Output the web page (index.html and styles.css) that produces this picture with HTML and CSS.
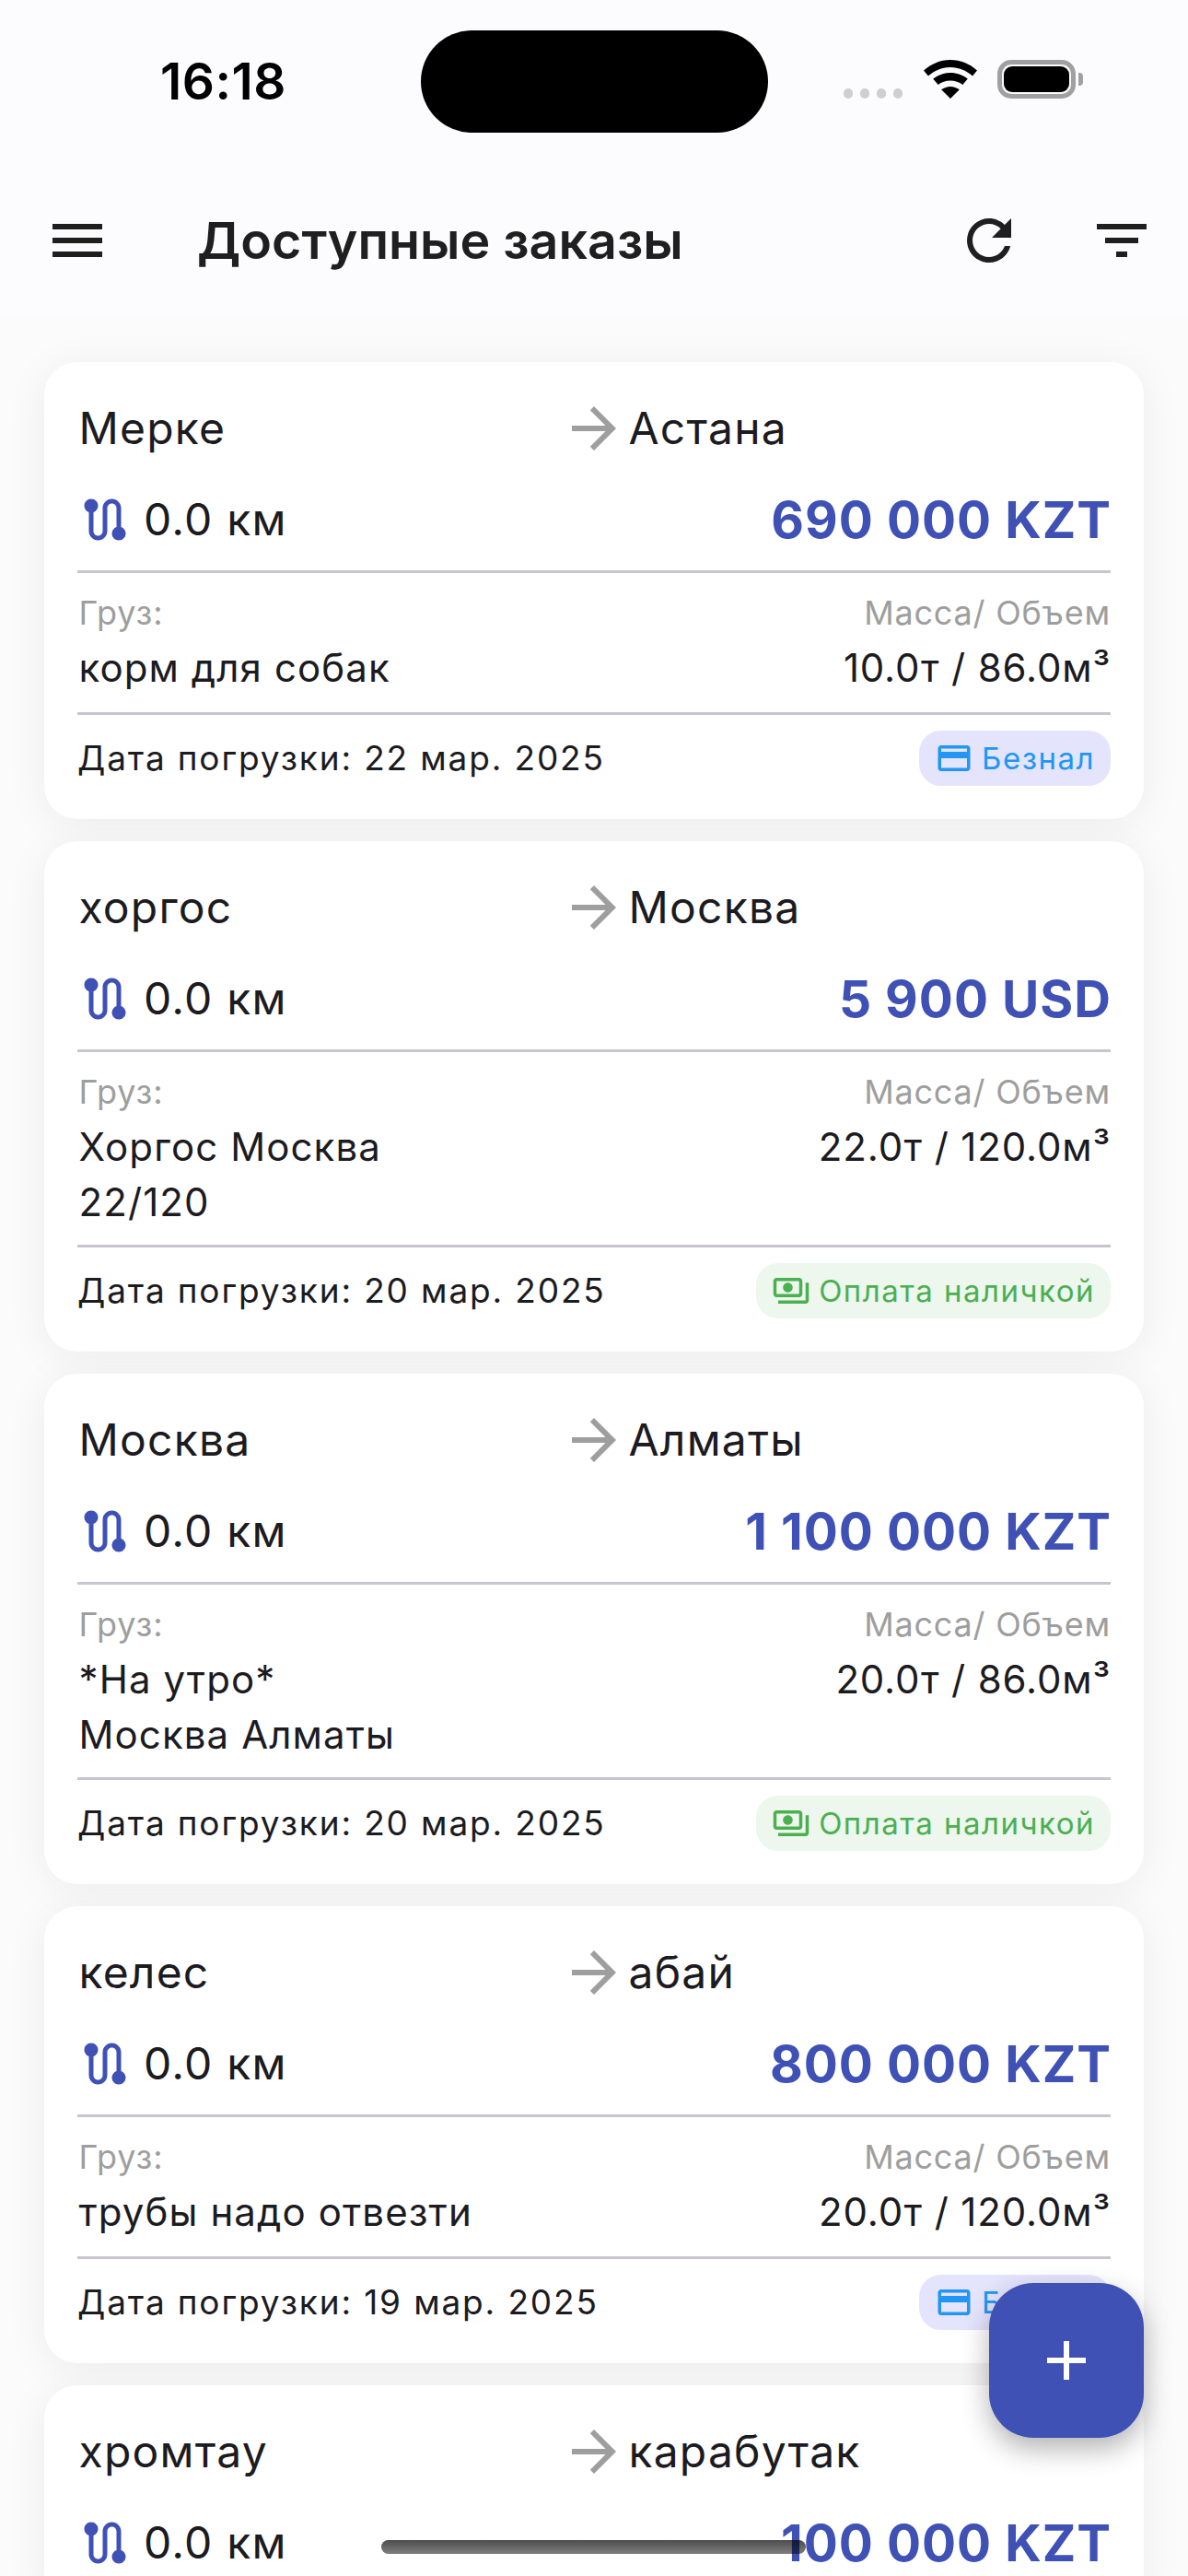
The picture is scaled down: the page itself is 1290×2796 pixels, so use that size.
FILE: index.html
```html
<!DOCTYPE html>
<html lang="ru">
<head>
<meta charset="utf-8">
<title>Доступные заказы</title>
<link rel="stylesheet" href="styles.css">
</head>
<body>
<div class="app">
  <header class="top">
    <div class="status">
      <div class="time">16:18</div>
      <div class="island"></div>
      <div class="sys">
        <div class="dots"><i></i><i></i><i></i><i></i></div>
        <svg class="wifi" viewBox="0 0 58 42"><path d="M29 0C18 0 8 4.200 0 11.500l5 6C12 11.500 20 8 29 8s17 3.500 24 9.500l5-6C50 4.200 40 0 29 0z"/><path d="M29 14c-7 0-13.500 2.500-18.800 6.500l5.500 6.500c3.600-2.800 8.300-4.500 13.300-4.500s9.700 1.700 13.300 4.500l5.500-6.500C42.500 16.500 36 14 29 14z"/><path d="M29 29c-3.700 0-7.100 1.300-9.800 3.300L29 42l9.800-9.700C36.100 30.300 32.700 29 29 29z"/></svg>
        <div class="battery"><div class="level"></div></div>
        <div class="cap"></div>
      </div>
    </div>
    <div class="bar">
      <svg class="ic" viewBox="0 0 24 24"><path d="M3 18h18v-2H3v2zm0-5h18v-2H3v2zm0-7v2h18V6H3z"/></svg>
      <h1 class="title">Доступные заказы</h1>
      <svg class="ic refresh" viewBox="0 0 24 24"><path d="M17.650 6.350C16.200 4.900 14.210 4 12 4c-4.420 0-7.990 3.580-7.990 8s3.570 8 7.990 8c3.730 0 6.840-2.550 7.730-6h-2.080c-.82 2.330-3.040 4-5.650 4-3.310 0-6-2.690-6-6s2.690-6 6-6c1.660 0 3.140.69 4.220 1.780L13 11h7V4l-2.350 2.350z"/></svg>
      <svg class="ic filter" viewBox="0 0 24 24"><path d="M10 18h4v-2h-4v2zM3 6v2h18V6H3zm3 7h12v-2H6v2z"/></svg>
    </div>
  </header>

  <main class="list">
    <article class="card">
      <div class="cities"><span class="city">Мерке</span><svg class="arrow" viewBox="0 0 24 24"><path d="M12 4l-1.410 1.410L16.170 11H4v2h12.170l-5.580 5.590L12 20l8-8z"/></svg><span class="city">Астана</span></div>
      <div class="trip"><svg class="route" viewBox="0 0 24 24"><path d="M19 15.180V7c0-2.210-1.790-4-4-4s-4 1.790-4 4v10c0 1.100-.9 2-2 2s-2-.9-2-2V8.820C8.160 8.400 9 7.300 9 6c0-1.660-1.340-3-3-3S3 4.340 3 6c0 1.300.84 2.400 2 2.820V17c0 2.210 1.790 4 4 4s4-1.790 4-4V7c0-1.100.9-2 2-2s2 .9 2 2v8.180c-1.160.41-2 1.510-2 2.820 0 1.660 1.340 3 3 3s3-1.340 3-3c0-1.300-.84-2.400-2-2.820z"/></svg><span class="dist">0.0 км</span><span class="price">690 000 KZT</span></div>
      <hr class="line">
      <div class="cargo">
        <div class="left"><div class="label">Груз:</div><div class="val">корм для собак</div></div>
        <div class="right"><div class="label">Масса/ Объем</div><div class="val">10.0т / 86.0м³</div></div>
      </div>
      <hr class="line">
      <div class="foot"><span class="date">Дата погрузки: 22 мар. 2025</span>
        <span class="badge card-pay"><svg viewBox="0 0 24 24"><path d="M20 4H4c-1.110 0-1.990.89-1.990 2L2 18c0 1.110.89 2 2 2h16c1.110 0 2-.89 2-2V6c0-1.110-.89-2-2-2zm0 14H4v-6h16v6zm0-10H4V6h16v2z"/></svg>Безнал</span></div>
    </article>

    <article class="card">
      <div class="cities"><span class="city">хоргос</span><svg class="arrow" viewBox="0 0 24 24"><path d="M12 4l-1.410 1.410L16.170 11H4v2h12.170l-5.580 5.590L12 20l8-8z"/></svg><span class="city">Москва</span></div>
      <div class="trip"><svg class="route" viewBox="0 0 24 24"><path d="M19 15.180V7c0-2.210-1.790-4-4-4s-4 1.790-4 4v10c0 1.100-.9 2-2 2s-2-.9-2-2V8.820C8.160 8.400 9 7.300 9 6c0-1.660-1.340-3-3-3S3 4.340 3 6c0 1.300.84 2.400 2 2.820V17c0 2.210 1.790 4 4 4s4-1.790 4-4V7c0-1.100.9-2 2-2s2 .9 2 2v8.180c-1.160.41-2 1.510-2 2.820 0 1.660 1.340 3 3 3s3-1.340 3-3c0-1.300-.84-2.400-2-2.820z"/></svg><span class="dist">0.0 км</span><span class="price">5 900 USD</span></div>
      <hr class="line">
      <div class="cargo">
        <div class="left"><div class="label">Груз:</div><div class="val">Хоргос Москва<br>22/120</div></div>
        <div class="right"><div class="label">Масса/ Объем</div><div class="val">22.0т / 120.0м³</div></div>
      </div>
      <hr class="line">
      <div class="foot"><span class="date">Дата погрузки: 20 мар. 2025</span>
        <span class="badge cash-pay"><svg viewBox="0 0 24 24"><path d="M19 14V6c0-1.100-.9-2-2-2H3c-1.100 0-2 .9-2 2v8c0 1.100.9 2 2 2h14c1.100 0 2-.9 2-2zm-2 0H3V6h14v8zm-7-7c-1.660 0-3 1.340-3 3s1.340 3 3 3 3-1.340 3-3-1.340-3-3-3zm13 0v11c0 1.100-.9 2-2 2H4v-2h17V7h2z"/></svg>Оплата наличкой</span></div>
    </article>

    <article class="card">
      <div class="cities"><span class="city">Москва</span><svg class="arrow" viewBox="0 0 24 24"><path d="M12 4l-1.410 1.410L16.170 11H4v2h12.170l-5.580 5.590L12 20l8-8z"/></svg><span class="city">Алматы</span></div>
      <div class="trip"><svg class="route" viewBox="0 0 24 24"><path d="M19 15.180V7c0-2.210-1.790-4-4-4s-4 1.790-4 4v10c0 1.100-.9 2-2 2s-2-.9-2-2V8.820C8.160 8.400 9 7.300 9 6c0-1.660-1.340-3-3-3S3 4.340 3 6c0 1.300.84 2.400 2 2.820V17c0 2.210 1.790 4 4 4s4-1.790 4-4V7c0-1.100.9-2 2-2s2 .9 2 2v8.180c-1.160.41-2 1.510-2 2.820 0 1.660 1.340 3 3 3s3-1.340 3-3c0-1.300-.84-2.400-2-2.820z"/></svg><span class="dist">0.0 км</span><span class="price">1 100 000 KZT</span></div>
      <hr class="line">
      <div class="cargo">
        <div class="left"><div class="label">Груз:</div><div class="val">*На утро*<br>Москва Алматы</div></div>
        <div class="right"><div class="label">Масса/ Объем</div><div class="val">20.0т / 86.0м³</div></div>
      </div>
      <hr class="line">
      <div class="foot"><span class="date">Дата погрузки: 20 мар. 2025</span>
        <span class="badge cash-pay"><svg viewBox="0 0 24 24"><path d="M19 14V6c0-1.100-.9-2-2-2H3c-1.100 0-2 .9-2 2v8c0 1.100.9 2 2 2h14c1.100 0 2-.9 2-2zm-2 0H3V6h14v8zm-7-7c-1.660 0-3 1.340-3 3s1.340 3 3 3 3-1.340 3-3-1.340-3-3-3zm13 0v11c0 1.100-.9 2-2 2H4v-2h17V7h2z"/></svg>Оплата наличкой</span></div>
    </article>

    <article class="card">
      <div class="cities"><span class="city">келес</span><svg class="arrow" viewBox="0 0 24 24"><path d="M12 4l-1.410 1.410L16.170 11H4v2h12.170l-5.580 5.590L12 20l8-8z"/></svg><span class="city">абай</span></div>
      <div class="trip"><svg class="route" viewBox="0 0 24 24"><path d="M19 15.180V7c0-2.210-1.790-4-4-4s-4 1.790-4 4v10c0 1.100-.9 2-2 2s-2-.9-2-2V8.820C8.160 8.400 9 7.300 9 6c0-1.660-1.340-3-3-3S3 4.340 3 6c0 1.300.84 2.400 2 2.820V17c0 2.210 1.790 4 4 4s4-1.790 4-4V7c0-1.100.9-2 2-2s2 .9 2 2v8.180c-1.160.41-2 1.510-2 2.820 0 1.660 1.340 3 3 3s3-1.340 3-3c0-1.300-.84-2.400-2-2.820z"/></svg><span class="dist">0.0 км</span><span class="price">800 000 KZT</span></div>
      <hr class="line">
      <div class="cargo">
        <div class="left"><div class="label">Груз:</div><div class="val">трубы надо отвезти</div></div>
        <div class="right"><div class="label">Масса/ Объем</div><div class="val">20.0т / 120.0м³</div></div>
      </div>
      <hr class="line">
      <div class="foot"><span class="date">Дата погрузки: 19 мар. 2025</span>
        <span class="badge card-pay"><svg viewBox="0 0 24 24"><path d="M20 4H4c-1.110 0-1.990.89-1.990 2L2 18c0 1.110.89 2 2 2h16c1.110 0 2-.89 2-2V6c0-1.110-.89-2-2-2zm0 14H4v-6h16v6zm0-10H4V6h16v2z"/></svg>Безнал</span></div>
    </article>

    <article class="card">
      <div class="cities"><span class="city">хромтау</span><svg class="arrow" viewBox="0 0 24 24"><path d="M12 4l-1.410 1.410L16.170 11H4v2h12.170l-5.580 5.590L12 20l8-8z"/></svg><span class="city">карабутак</span></div>
      <div class="trip"><svg class="route" viewBox="0 0 24 24"><path d="M19 15.180V7c0-2.210-1.790-4-4-4s-4 1.790-4 4v10c0 1.100-.9 2-2 2s-2-.9-2-2V8.820C8.160 8.400 9 7.300 9 6c0-1.660-1.340-3-3-3S3 4.340 3 6c0 1.300.84 2.400 2 2.820V17c0 2.210 1.790 4 4 4s4-1.790 4-4V7c0-1.100.9-2 2-2s2 .9 2 2v8.180c-1.160.41-2 1.510-2 2.820 0 1.660 1.340 3 3 3s3-1.340 3-3c0-1.300-.84-2.400-2-2.820z"/></svg><span class="dist">0.0 км</span><span class="price">100 000 KZT</span></div>
    </article>
  </main>

  <button class="fab" aria-label="Добавить"><svg viewBox="0 0 24 24"><path d="M19 13h-6v6h-2v-6H5v-2h6V5h2v6h6v2z"/></svg></button>
  <div class="home"></div>
</div>
</body>
</html>
```

FILE: styles.css
```css
* { box-sizing: border-box; }
html, body { margin: 0; padding: 0; }
body {
  font-family: Inter, "Noto Sans", sans-serif;
  color: #1c1b1f;
  background: #fbfbfc;
}
.app {
  position: relative;
  width: 1290px;
  height: 2796px;
  overflow: hidden;
}
.top {
  position: relative;
  z-index: 1;
  height: 345px;
  background: #fcfcff;
}
.status {
  display: grid;
  grid-template-columns: 457px 377px 1fr;
  height: 177px;
}
.time {
  padding: 55px 0 0 174px;
  font-size: 55px;
  line-height: 66px;
  font-weight: 600;
  color: #000;
  letter-spacing: .5px;
}
.island {
  margin-top: 33px;
  height: 111px;
  border-radius: 56px;
  background: #000;
}
.sys {
  display: flex;
  align-items: flex-end;
  height: 107px;
  padding-left: 82px;
}
.dots { display: flex; gap: 8px; }
.dots i {
  display: block;
  width: 10px;
  height: 11px;
  border-radius: 5px;
  background: #cfcfcf;
}
.wifi { width: 58px; height: 42px; margin-left: 23px; fill: #000; }
.battery {
  width: 85px;
  height: 42px;
  margin-left: 22px;
  padding: 2px;
  border: 5px solid #a0a0a0;
  border-radius: 15px;
}
.level { height: 100%; border-radius: 9px; background: #000; }
.cap {
  width: 5px;
  height: 14px;
  margin: 0 0 14px 3px;
  border-radius: 0 4px 4px 0;
  background: #a0a0a0;
}
.bar {
  display: flex;
  align-items: center;
  height: 168px;
  padding: 0 36px 0 48px;
}
.ic { width: 72px; height: 72px; flex: none; fill: #1f1f1f; }
.title {
  flex: 1;
  margin: 0 0 0 94px;
  font-size: 55.5px;
  font-weight: 600;
  line-height: 72px;
  color: #1f1f1f;
}
.filter { margin-left: 72px; }

.list {
  display: flex;
  flex-direction: column;
  gap: 24px;
  padding: 48px 48px 0;
}
.card {
  flex: none;
  padding: 36px;
  border-radius: 36px;
  background: #fff;
  box-shadow: 0 6px 48px rgba(0, 0, 0, .06);
}
.cities {
  display: grid;
  grid-template-columns: 1fr 72px 1fr;
  align-items: center;
  height: 72px;
}
.city, .dist {
  font-size: 48px;
  line-height: 72px;
  letter-spacing: 1.2px;
}
.city { padding-left: 1.5px; }
.arrow { width: 72px; height: 72px; fill: #9e9e9e; }
.trip {
  display: flex;
  align-items: center;
  height: 76px;
  margin-top: 24px;
  padding-top: 2px;
}
.route { width: 60px; height: 60px; flex: none; fill: #3f51b5; }
.dist { margin-left: 12px; flex: 1; }
.price {
  margin-right: -1px;
  font-size: 55px;
  line-height: 74px;
  font-weight: 700;
  letter-spacing: 1px;
  color: #3f51b5;
}
.line {
  height: 3px;
  margin: 18px 0 19px;
  border: 0;
  background: #cac4d0;
}
.cargo {
  display: flex;
  justify-content: space-between;
  min-height: 116px;
}
.cargo + .line { margin: 16px 0 17px; }
.left { padding-left: 1.5px; }
.right { text-align: right; }
.label {
  font-size: 36px;
  line-height: 48px;
  letter-spacing: .8px;
  color: #9e9e9e;
}
.val {
  margin-top: 6px;
  font-size: 42px;
  line-height: 60px;
  letter-spacing: 1.1px;
}
.right .val { letter-spacing: .85px; }
.foot {
  display: flex;
  justify-content: space-between;
  align-items: center;
}
.date {
  font-size: 37px;
  line-height: 48px;
  letter-spacing: 1.85px;
}
.badge {
  display: flex;
  align-items: center;
  gap: 9px;
  height: 60px;
  padding: 0 17px 0 17px;
  border-radius: 24px;
  font-size: 33px;
  letter-spacing: 1.5px;
}
.badge svg { width: 42px; height: 42px; fill: currentColor; }
.card-pay { background: #e4e4fd; color: #2196f3; }
.cash-pay { background: #edf7ee; color: #4caf50; }

.fab {
  position: absolute;
  left: 1074px;
  top: 2478px;
  z-index: 2;
  display: flex;
  align-items: center;
  justify-content: center;
  width: 168px;
  height: 168px;
  padding: 0;
  border: 0;
  border-radius: 48px;
  background: #3f51b5;
  box-shadow: 0 12px 30px rgba(0, 0, 0, .3);
}
.fab svg { width: 72px; height: 72px; fill: #fff; }
.home {
  position: absolute;
  left: 414px;
  top: 2757px;
  z-index: 3;
  width: 461px;
  height: 15px;
  border-radius: 8px;
  background: linear-gradient(rgba(0, 0, 0, .7), rgba(0, 0, 0, .5));
}
```
